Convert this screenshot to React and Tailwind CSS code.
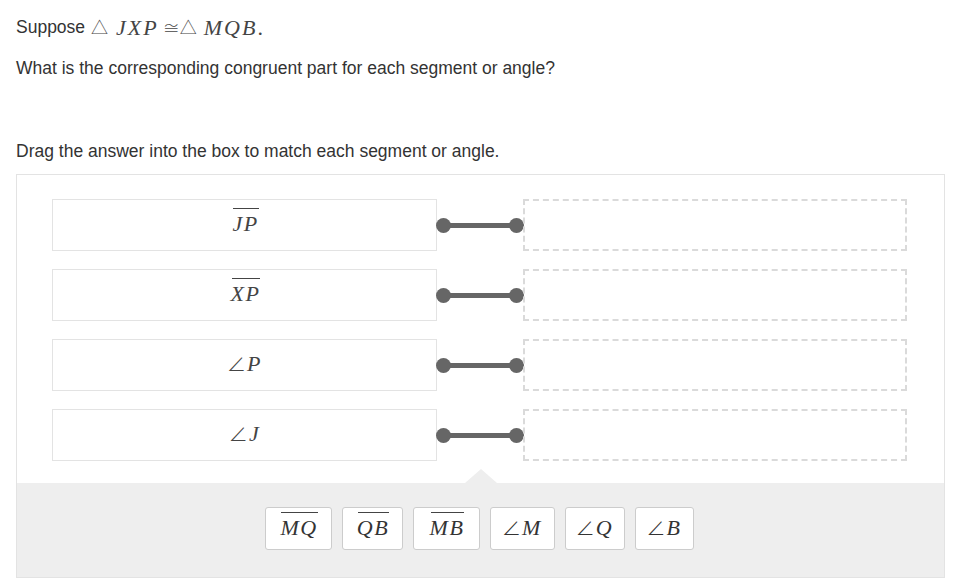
import React from "react";

const serif = { fontFamily: '"Liberation Serif", "DejaVu Serif", serif' };
const symFont = { fontFamily: '"Noto Sans CJK JP", "DejaVu Sans", sans-serif', fontWeight: 300 };

function Over({ children }) {
  return (
    <span className="relative inline-block italic tracking-[1.5px] pl-[2px]" style={serif}>
      <span className="absolute left-[3px] right-0 top-[1px] h-px bg-[#444]"></span>
      {children}
    </span>
  );
}

function Ang({ children }) {
  return (
    <span style={serif} className="inline-flex items-baseline">
      <span className="not-italic mr-[1px] text-[19px]" style={symFont}>∠</span>
      <span className="italic tracking-[1.5px]">{children}</span>
    </span>
  );
}

const rows = [
  <Over>JP</Over>,
  <Over>XP</Over>,
  <Ang>P</Ang>,
  <Ang>J</Ang>,
];

const tiles = [
  { el: <Over>MQ</Over>, w: "w-[67px]" },
  { el: <Over>QB</Over>, w: "w-[61px]" },
  { el: <Over>MB</Over>, w: "w-[67px]" },
  { el: <Ang>M</Ang>, w: "w-[65px]" },
  { el: <Ang>Q</Ang>, w: "w-[60px]" },
  { el: <Ang>B</Ang>, w: "w-[59px]" },
];

function Connector() {
  return (
    <div className="w-[86px] h-[52px] flex items-center justify-center">
      <div className="flex items-center">
        <div className="w-[15px] h-[15px] rounded-full bg-[#666]"></div>
        <div className="w-[60px] h-[5px] bg-[#666] -mx-[1px]"></div>
        <div className="w-[15px] h-[15px] rounded-full bg-[#666]"></div>
      </div>
    </div>
  );
}

export default function App() {
  return (
    <div
      className="w-[965px] h-[587px] bg-white text-[#333] pl-4 pt-[15px]"
      style={{ fontFamily: '"Liberation Sans", Arial, sans-serif' }}
    >
      <div className="h-6 flex items-center text-[17.5px]">
        <span>Suppose</span>
        <span className="ml-[6px] text-[22px] flex items-center text-[#444]" style={serif}>
          <span className="not-italic text-[17px]" style={symFont}>△</span>
          <span className="italic ml-[8px] tracking-[2px]">JXP</span>
          <span className="ml-[4px] text-[17px]" style={symFont}>≅</span>
          <span className="text-[17px]" style={symFont}>△</span>
          <span className="italic ml-[7px] tracking-[2px]">MQB</span>
          <span>.</span>
        </span>
      </div>
      <div className="h-6 flex items-center mt-[17px] text-[17.5px]">
        What is the corresponding congruent part for each segment or angle?
      </div>
      <div className="h-6 flex items-center mt-[59px] text-[17.5px]">
        Drag the answer into the box to match each segment or angle.
      </div>
      <div className="mt-[11px] w-[929px] h-[404px] border border-[#e3e3e3] flex flex-col">
        <div className="flex flex-col gap-[18px] pt-6 pl-[35px]">
          {rows.map((r, i) => (
            <div key={i} className="flex items-center">
              <div className="w-[385px] h-[52px] pb-[3px] border border-[#e3e3e3] flex items-center justify-center text-[22px] text-[#444]">
                {r}
              </div>
              <Connector />
              <div className="w-[384px] h-[52px] border-2 border-dashed border-[#dadada]"></div>
            </div>
          ))}
        </div>
        <div className="flex-1 mt-[8px] flex flex-col">
          <div className="flex justify-center">
            <div className="w-0 h-0 border-l-[16px] border-r-[16px] border-b-[14px] border-l-transparent border-r-transparent border-b-[#eeeeee]"></div>
          </div>
          <div className="flex-1 bg-[#eeeeee] flex justify-center items-start pt-[24px] gap-[10px] pr-[3px]">
            {tiles.map((t, i) => (
              <div
                key={i}
                className={`${t.w} h-[43px] pb-[2px] bg-white border border-[#cccccc] rounded-[3px] flex items-center justify-center text-[22px] text-[#333]`}
              >
                {t.el}
              </div>
            ))}
          </div>
        </div>
      </div>
    </div>
  );
}
